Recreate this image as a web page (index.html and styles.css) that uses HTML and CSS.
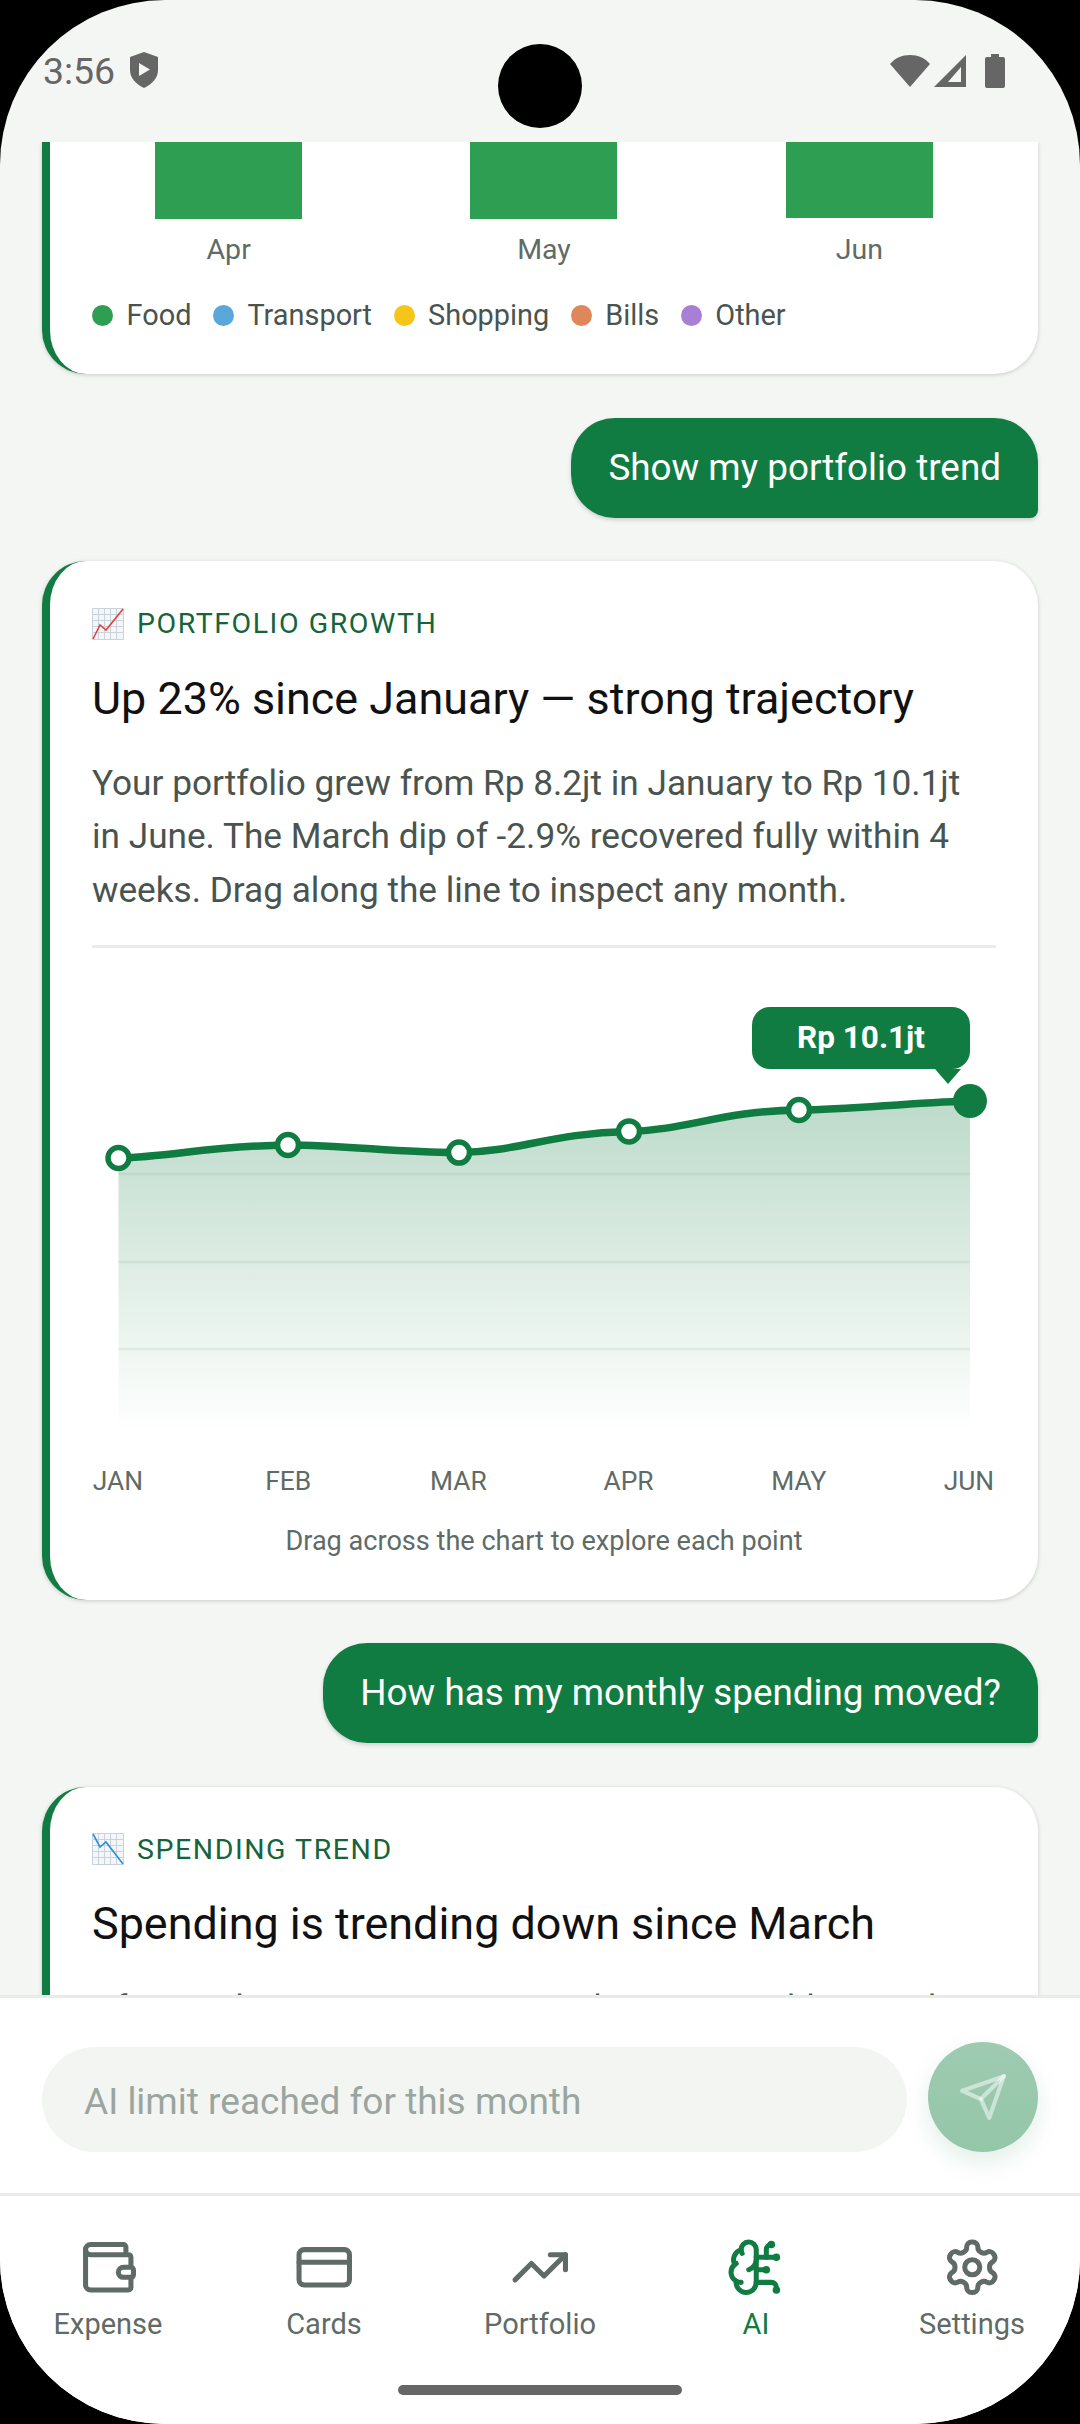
FILE: index.html
```html
<!DOCTYPE html>
<html lang="en">
<head>
    <meta charset="UTF-8">
    <meta name="viewport" content="width=device-width, initial-scale=1.0">
    <title>AI Insights</title>
    <link rel="stylesheet" href="styles.css">
</head>
<body>
    <div class="screen">
        <div class="camera"></div>

        <!-- Status bar -->
        <div class="status-bar">
            <div class="status-left">
                <span class="status-time">3:56</span>
                <svg class="shield" viewBox="0 0 28 36"><path d="M14 0 28 5v13c0 8-6 14-14 18C6 32 0 26 0 18V5Z" fill="#666"/><path d="M9 11v13l11-6.500Z" fill="#f4f6f3"/></svg>
            </div>
            <div class="status-right">
                <svg class="wifi" viewBox="0 0 40 34"><path d="M20 33 0 10C5 4 12 1 20 1s15 3 20 9Z" fill="#666"/></svg>
                <svg class="signal" viewBox="0 0 32 32"><path fill-rule="evenodd" d="M32 0v32H0ZM27 12 14 27h13Z" fill="#666"/></svg>
                <svg class="battery" viewBox="0 0 20 34"><path d="M6 0h8v3h4a2 2 0 0 1 2 2v27a2 2 0 0 1-2 2H2a2 2 0 0 1-2-2V5a2 2 0 0 1 2-2h4Z" fill="#666"/></svg>
            </div>
        </div>

        <!-- Chat -->
        <div class="chat">
            <div class="card card-cut">
                <div class="bars">
                    <div class="bar-col"><div class="bar"></div><span>Apr</span></div>
                    <div class="bar-col"><div class="bar"></div><span>May</span></div>
                    <div class="bar-col"><div class="bar bar-short"></div><span>Jun</span></div>
                </div>
                <div class="legend">
                    <div class="legend-item"><i class="dot dot-food"></i>Food</div>
                    <div class="legend-item"><i class="dot dot-transport"></i>Transport</div>
                    <div class="legend-item"><i class="dot dot-shopping"></i>Shopping</div>
                    <div class="legend-item"><i class="dot dot-bills"></i>Bills</div>
                    <div class="legend-item"><i class="dot dot-other"></i>Other</div>
                </div>
            </div>

            <div class="bubble">Show my portfolio trend</div>

            <div class="card">
                <div class="card-label">
                    <svg class="emoji" viewBox="0 0 32 32">
                        <path d="M.5.500h31v31H.5ZM6.500.500v31M12.500.500v31M18.500.500v31M24.500.500v31M.5 6.500h31M.5 12.500h31M.5 18.500h31M.5 24.500h31" fill="#f4f6f9" stroke="#c9d3dc"/>
                        <path d="M1 31 8 17l6 5L31 1" fill="none" stroke="#e8403c" stroke-width="1.600"/>
                    </svg>
                    PORTFOLIO GROWTH
                </div>
                <h2 class="card-title">Up 23% since January — strong trajectory</h2>
                <p class="card-body">Your portfolio grew from Rp 8.2jt in January to Rp 10.1jt in June. The March dip of -2.9% recovered fully within 4 weeks. Drag along the line to inspect any month.</p>
                <div class="divider"></div>

                <div class="chart">
                    <svg class="chart-svg" viewBox="0 0 904 490">
                        <defs>
                            <linearGradient id="area" x1="0" y1="0" x2="0" y2="1">
                                <stop offset="0" stop-color="#117c41" stop-opacity="0.28"/>
                                <stop offset="1" stop-color="#117c41" stop-opacity="0"/>
                            </linearGradient>
                        </defs>
                        <path class="grid-line" d="M26.500 214H878M26.500 302H878M26.500 389H878"/>
                        <path fill="url(#area)" d="M26.500 198C80 197 115 186 196 185C253 185 310 193 367 192.600C425 192 460 173 537 171.400C595 170 630 151 707 150C760 150 810 143 878 141V472H26.500Z"/>
                        <path class="trend" d="M26.500 198C80 197 115 186 196 185C253 185 310 193 367 192.600C425 192 460 173 537 171.400C595 170 630 151 707 150C760 150 810 143 878 141"/>
                        <circle class="point" cx="26.500" cy="198" r="10.500"/>
                        <circle class="point" cx="196" cy="185" r="10.500"/>
                        <circle class="point" cx="367" cy="192.600" r="10.500"/>
                        <circle class="point" cx="537" cy="171.400" r="10.500"/>
                        <circle class="point" cx="707" cy="150" r="10.500"/>
                        <circle cx="878" cy="141" r="17" fill="#117c41"/>
                    </svg>
                    <div class="chart-tip">Rp 10.1jt</div>
                </div>

                <div class="months">
                    <span>JAN</span><span>FEB</span><span>MAR</span><span>APR</span><span>MAY</span><span>JUN</span>
                </div>
                <div class="chart-hint">Drag across the chart to explore each point</div>
            </div>

            <div class="bubble">How has my monthly spending moved?</div>

            <div class="card">
                <div class="card-label">
                    <svg class="emoji" viewBox="0 0 32 32">
                        <path d="M.5.500h31v31H.5ZM6.500.500v31M12.500.500v31M18.500.500v31M24.500.500v31M.5 6.500h31M.5 12.500h31M.5 18.500h31M.5 24.500h31" fill="#f4f6f9" stroke="#c9d3dc"/>
                        <path d="M1 1 8 14l6-5 17 22" fill="none" stroke="#2a8fdc" stroke-width="1.600"/>
                    </svg>
                    SPENDING TREND
                </div>
                <h2 class="card-title">Spending is trending down since March</h2>
                <p class="card-body">After peaking at Rp 4.4jt in March, your monthly spend has eased.</p>
            </div>
        </div>

        <!-- Composer -->
        <div class="composer">
            <div class="composer-input">AI limit reached for this month</div>
            <div class="send">
                <svg viewBox="0 0 24 24"><path d="m22 2-7 20-4-9-9-4Z"/><path d="M22 2 11 13"/></svg>
            </div>
        </div>

        <!-- Bottom nav -->
        <div class="nav">
            <div class="nav-items">
                <div class="nav-item">
                    <svg viewBox="0 0 24 24"><path d="M19 7V4a1 1 0 0 0-1-1H5a2 2 0 0 0 0 4h15a1 1 0 0 1 1 1v4h-3a2 2 0 0 0 0 4h3a1 1 0 0 0 1-1v-2a1 1 0 0 0-1-1"/><path d="M3 5v14a2 2 0 0 0 2 2h15a1 1 0 0 0 1-1v-4"/></svg>
                    <span>Expense</span>
                </div>
                <div class="nav-item">
                    <svg viewBox="0 0 24 24"><rect x="2" y="5" width="20" height="14" rx="2"/><path d="M2 10h20"/></svg>
                    <span>Cards</span>
                </div>
                <div class="nav-item">
                    <svg viewBox="0 0 24 24"><path d="M22 7 13.500 15.500l-5-5L2 17"/><path d="M16 7h6v6"/></svg>
                    <span>Portfolio</span>
                </div>
                <div class="nav-item nav-active">
                    <svg viewBox="0 0 24 24"><path d="M12 5a3 3 0 1 0-5.997.125 4 4 0 0 0-2.526 5.770 4 4 0 0 0 .556 6.588A4 4 0 1 0 12 18Z"/><path d="M9 13a4.500 4.500 0 0 0 3-4"/><path d="M6.003 5.125A3 3 0 0 0 6.401 6.500"/><path d="M3.477 10.896a4 4 0 0 1 .585-.396"/><path d="M6 18a4 4 0 0 1-1.967-.516"/><path d="M12 13h4"/><path d="M12 18h6a2 2 0 0 1 2 2v1"/><path d="M12 8h8"/><path d="M16 8V5a2 2 0 0 1 2-2"/><circle cx="16" cy="13" r=".5"/><circle cx="18" cy="3" r=".5"/><circle cx="20" cy="21" r=".5"/><circle cx="20" cy="8" r=".5"/></svg>
                    <span>AI</span>
                </div>
                <div class="nav-item">
                    <svg viewBox="0 0 24 24"><path d="M12.220 2h-.44a2 2 0 0 0-2 2v.18a2 2 0 0 1-1 1.730l-.43.25a2 2 0 0 1-2 0l-.15-.08a2 2 0 0 0-2.730.73l-.22.38a2 2 0 0 0 .73 2.730l.15.1a2 2 0 0 1 1 1.720v.51a2 2 0 0 1-1 1.740l-.15.09a2 2 0 0 0-.73 2.730l.22.38a2 2 0 0 0 2.730.73l.15-.08a2 2 0 0 1 2 0l.43.25a2 2 0 0 1 1 1.730V20a2 2 0 0 0 2 2h.44a2 2 0 0 0 2-2v-.18a2 2 0 0 1 1-1.730l.43-.25a2 2 0 0 1 2 0l.15.08a2 2 0 0 0 2.730-.73l.22-.39a2 2 0 0 0-.73-2.730l-.15-.08a2 2 0 0 1-1-1.740v-.5a2 2 0 0 1 1-1.740l.15-.09a2 2 0 0 0 .73-2.730l-.22-.38a2 2 0 0 0-2.730-.73l-.15.08a2 2 0 0 1-2 0l-.43-.25a2 2 0 0 1-1-1.730V4a2 2 0 0 0-2-2z"/><circle cx="12" cy="12" r="3"/></svg>
                    <span>Settings</span>
                </div>
            </div>
            <div class="home-bar"></div>
        </div>
    </div>
</body>
</html>
```
FILE: styles.css
```css
/* General Styles */
html, body {
    margin: 0;
    height: 100%;
    background-color: #000;
}

body {
    font-family: Roboto, "Liberation Sans", sans-serif;
    overflow: hidden;
}

.screen {
    position: relative;
    width: 1080px;
    height: 2424px;
    display: flex;
    flex-direction: column;
    overflow: hidden;
    border-radius: 165px;
    background-color: #f4f6f3;
}

.camera {
    position: absolute;
    top: 44px;
    left: 498px;
    width: 84px;
    height: 84px;
    border-radius: 50%;
    background-color: #000;
}

/* Status Bar */
.status-bar {
    flex: none;
    height: 142px;
    box-sizing: border-box;
    padding: 51px 75px 0 43px;
    display: flex;
    justify-content: space-between;
    align-items: flex-start;
}

.status-left,
.status-right {
    display: flex;
    align-items: center;
}

.status-right {
    margin-top: 3px;
}

.status-time {
    font-size: 37.400px;
    line-height: 36px;
    margin-top: 2px;
    color: #666;
}

.shield {
    width: 28px;
    height: 36px;
    margin-left: 15px;
}

.wifi {
    width: 40px;
    height: 34px;
}

.signal {
    width: 32px;
    height: 32px;
    margin-left: 4px;
}

.battery {
    width: 20px;
    height: 34px;
    margin-left: 19px;
}

/* Chat */
.chat {
    flex: 1;
    min-height: 0;
    overflow: hidden;
    box-sizing: border-box;
    padding: 0 42px;
    display: flex;
    flex-direction: column;
    gap: 43.500px;
}

.card {
    flex: none;
    box-sizing: border-box;
    background-color: #fff;
    border-left: 8px solid #117c41;
    border-radius: 44px;
    padding: 44.500px 42px 0 42px;
    box-shadow: 0 1px 4px rgba(0, 0, 0, 0.18);
}

.card-cut {
    height: 232px;
    padding-top: 0;
    border-top-left-radius: 0;
    border-top-right-radius: 0;
}

.bubble {
    flex: none;
    align-self: flex-end;
    padding: 30px 37px;
    font-size: 36.850px;
    line-height: 40px;
    color: #fff;
    background-color: #117c41;
    border-radius: 44px 44px 8px 44px;
    box-shadow: 0 2px 4px rgba(0, 0, 0, 0.16);
}

/* Bar chart remainder */
.bars {
    display: grid;
    grid-template-columns: repeat(3, 1fr);
    margin: 0 -21px;
}

.bar-col {
    display: flex;
    flex-direction: column;
    align-items: center;
    font-size: 28.500px;
    line-height: 32px;
    color: #5f6b66;
}

.bar {
    width: 147px;
    height: 77px;
    margin-bottom: 15px;
    background-color: #2e9e52;
}

.bar-short {
    height: 76px;
    margin-bottom: 16px;
}

.legend {
    display: flex;
    gap: 21.500px;
    margin-top: 29px;
}

.legend-item {
    display: flex;
    align-items: center;
    gap: 13.500px;
    font-size: 28.900px;
    line-height: 40px;
    color: #49544f;
}

.dot {
    width: 21px;
    height: 21px;
    border-radius: 50%;
}

.dot-food { background-color: #2e9e52; }
.dot-transport { background-color: #5ba7d9; }
.dot-shopping { background-color: #f5c518; }
.dot-bills { background-color: #e0875a; }
.dot-other { background-color: #a97fd6; }

/* Insight Card */
.card-label {
    display: flex;
    align-items: center;
    gap: 13px;
    height: 36px;
    font-size: 28.500px;
    letter-spacing: 1.550px;
    color: #15643a;
}

.emoji {
    width: 32px;
    height: 32px;
}

.card-title {
    margin: 29px 0 0;
    font-size: 44.900px;
    line-height: 56px;
    font-weight: 400;
    color: #111;
}

.card-body {
    margin: 30px 0 0;
    font-size: 35.200px;
    line-height: 53.600px;
    color: #49544f;
}

.divider {
    height: 3px;
    margin-top: 28px;
    background-color: #e8ebe8;
}

/* Line Chart */
.chart {
    position: relative;
    height: 490px;
    margin-top: 11.500px;
}

.chart-svg {
    display: block;
    width: 904px;
    height: 490px;
}

.grid-line {
    fill: none;
    stroke: #eef2ef;
    stroke-width: 2.500;
}

.trend {
    fill: none;
    stroke: #117c41;
    stroke-width: 7.500;
}

.point {
    fill: #fff;
    stroke: #117c41;
    stroke-width: 5.500;
}

.chart-tip {
    position: absolute;
    top: 47px;
    left: 660px;
    width: 218px;
    height: 62px;
    border-radius: 18px;
    background-color: #117c41;
    color: #fff;
    font-size: 31.500px;
    font-weight: 700;
    line-height: 62px;
    text-align: center;
}

.chart-tip::after {
    content: "";
    position: absolute;
    top: 62px;
    right: 9px;
    border-left: 13px solid transparent;
    border-right: 13px solid transparent;
    border-top: 15px solid #117c41;
}

.months {
    display: flex;
    justify-content: space-between;
    margin-top: 15px;
    padding-right: 1px;
    font-size: 26.400px;
    line-height: 32px;
    color: #5f6b66;
}

.months span {
    width: 52px;
    display: flex;
    justify-content: center;
}

.chart-hint {
    margin-top: 27px;
    padding-bottom: 42px;
    text-align: center;
    font-size: 27.100px;
    line-height: 34px;
    color: #5f6b66;
}

/* Composer */
.composer {
    flex: none;
    height: 198px;
    box-sizing: border-box;
    border-top: 3px solid #e8ebe8;
    padding: 45px 42px 41px;
    display: flex;
    align-items: flex-end;
    gap: 21px;
    background-color: #fff;
}

.composer-input {
    flex: 1;
    height: 105px;
    box-sizing: border-box;
    padding-left: 42px;
    border-radius: 53px;
    background-color: #f3f5f2;
    color: #9aa5a0;
    font-size: 37px;
    line-height: 109px;
}

.send {
    flex: none;
    width: 110px;
    height: 110px;
    border-radius: 50%;
    display: flex;
    align-items: center;
    justify-content: center;
    background: linear-gradient(#9ecbb2, #94c6a8);
    box-shadow: 0 10px 24px rgba(17, 124, 65, 0.12);
}

.send svg {
    width: 50px;
    height: 50px;
    fill: none;
    stroke: rgba(255, 255, 255, 0.5);
    stroke-width: 2;
    stroke-linecap: round;
    stroke-linejoin: round;
}

/* Bottom Nav */
.nav {
    flex: none;
    height: 231px;
    box-sizing: border-box;
    border-top: 3px solid #e8ebe8;
    padding-top: 41px;
    background-color: #fff;
}

.nav-items {
    display: flex;
}

.nav-item {
    flex: 1;
    display: flex;
    flex-direction: column;
    align-items: center;
    gap: 8px;
    font-size: 29px;
    line-height: 36px;
    color: #5f6b66;
}

.nav-item svg {
    width: 60.500px;
    height: 60.500px;
    fill: none;
    stroke: currentColor;
    stroke-width: 2;
    stroke-linecap: round;
    stroke-linejoin: round;
}

.nav-active {
    color: #117c41;
}

.home-bar {
    width: 284px;
    height: 10px;
    margin: 43px auto 0;
    border-radius: 5px;
    background-color: #666;
}
```
